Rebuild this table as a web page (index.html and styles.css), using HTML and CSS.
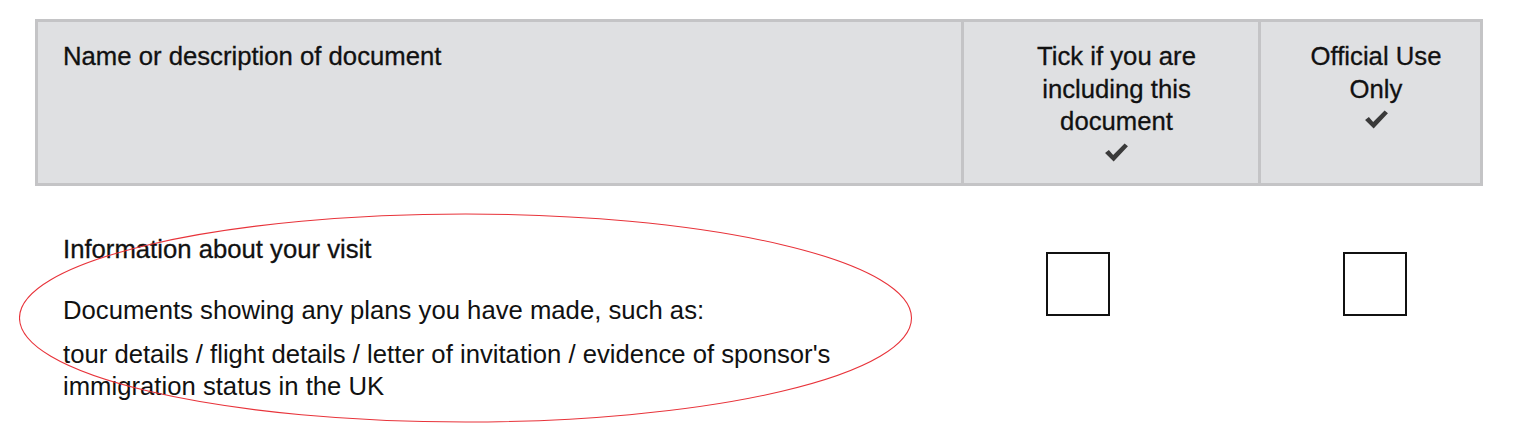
FILE: index.html
```html
<!DOCTYPE html>
<html lang="en">
<head>
<meta charset="utf-8">
<title>Document checklist</title>
<link rel="stylesheet" href="styles.css">
</head>
<body>
<div class="page">
  <div class="table">
    <div class="head-row">
      <div class="hcell hcell-name">Name or description of document</div>
      <div class="hcell hcell-tick">
        <span>Tick if you are<br>including this<br>document</span>
        <svg class="tick" viewBox="0 0 26 22" width="25" height="21" aria-hidden="true"><path d="M1 11.5 L5 8.5 L9.5 13.5 L21.5 1.5 L25 4.5 L10 20.5 Z" fill="#3a3a3a"/></svg>
      </div>
      <div class="hcell hcell-official">
        <span>Official Use<br>Only</span>
        <svg class="tick" viewBox="0 0 26 22" width="25" height="21" aria-hidden="true"><path d="M1 11.5 L5 8.5 L9.5 13.5 L21.5 1.5 L25 4.5 L10 20.5 Z" fill="#3a3a3a"/></svg>
      </div>
    </div>
    <div class="body-row">
      <div class="bcell bcell-name">
        <h3 class="item-title">Information about your visit</h3>
        <p class="item-text">Documents showing any plans you have made, such as:</p>
        <p class="item-text item-list">tour details / flight details / letter of invitation / evidence of sponsor's immigration status in the UK</p>
      </div>
      <div class="bcell bcell-box"><div class="checkbox"></div></div>
      <div class="bcell bcell-box"><div class="checkbox"></div></div>
    </div>
  </div>
  <svg class="annotation" width="900" height="214" viewBox="0 0 900 214" aria-hidden="true"><ellipse cx="446.5" cy="105" rx="446" ry="104" fill="none" stroke="#e8333a" stroke-width="1.1"/></svg>
</div>
</body>
</html>
```

FILE: styles.css
```css
html, body {
  margin: 0;
  padding: 0;
  background: #ffffff;
}

body {
  font-family: "Liberation Sans", Arial, sans-serif;
  color: #111111;
}

.page {
  position: relative;
  width: 1527px;
  height: 424px;
  overflow: hidden;
  padding: 19px 0 0 35px;
  box-sizing: border-box;
}

.table {
  width: 1448px;
}

.head-row {
  display: grid;
  grid-template-columns: 923px 297px 222px;
  border: 3px solid #c4c4c6;
  background: #dfe0e2;
  height: 161px;
}

.hcell {
  font-size: 25.7px;
  line-height: 32.5px;
  -webkit-text-stroke: 0.3px #111;
}

.hcell-name {
  padding: 18px 0 0 25px;
}

.hcell-tick,
.hcell-official {
  border-left: 3px solid #c4c4c6;
  display: flex;
  flex-direction: column;
  align-items: center;
  text-align: center;
  padding-top: 18px;
  padding-left: 11px;
}

.tick {
  display: block;
  margin-top: 4px;
}

.body-row {
  display: grid;
  grid-template-columns: 926px 297px 222px;
  padding-top: 47px;
}

.bcell-name {
  padding-left: 28px;
}

.item-title {
  margin: 0;
  font-size: 25.7px;
  line-height: 32px;
  font-weight: normal;
  -webkit-text-stroke: 0.3px #111;
}

.item-text {
  margin: 29px 0 0;
  font-size: 25.7px;
  line-height: 32px;
  width: 860px;
}

.item-list {
  margin-top: 12px;
}

.bcell-box {
  padding: 19px 0 0 85px;
}

.checkbox {
  width: 60px;
  height: 60px;
  border: 2px solid #111;
  background: #fff;
}

.annotation {
  position: absolute;
  left: 19px;
  top: 213px;
}
```
